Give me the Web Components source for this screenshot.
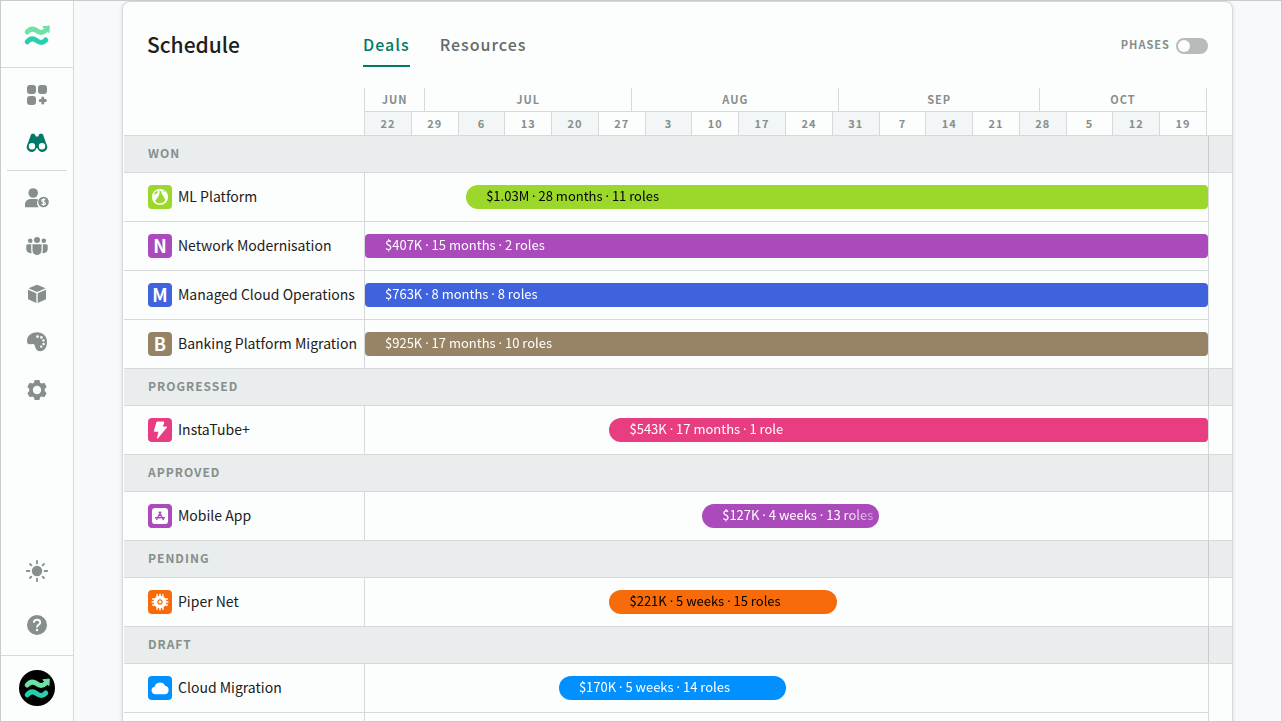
<!DOCTYPE html>
<html lang="en">
<head>
<meta charset="utf-8">
<title>Schedule</title>
<style>
  :root {
    --surface: #fcfdfd;
    --canvas: #f7fafa;
    --line: #d6d9d9;
    --band: #e9eded;
    --stripe: #f3f6f6;
    --text: #1c2020;
    --muted: #868f8c;
    --accent: #007a66;
  }
  * { box-sizing: border-box; }
  body {
    margin: 0;
    height: 100vh;
    overflow: hidden;
    border: 1px solid #c9cbcb;
    background: var(--canvas);
    color: var(--text);
    font: 14px/20px "Noto Sans CJK SC", "Noto Sans", sans-serif;
  }
</style>
</head>
<body>
<app-layout>
  <app-sidebar slot="sidebar">
    <app-icon slot="brand" name="logo" size="28"></app-icon>
    <nav-item icon="apps" label="Dashboard"></nav-item>
    <nav-item icon="binoculars" label="Schedule" active></nav-item>
    <nav-divider></nav-divider>
    <nav-item icon="client" label="Clients"></nav-item>
    <nav-item icon="team" label="Team"></nav-item>
    <nav-item icon="box" label="Products"></nav-item>
    <nav-item icon="palette" label="Branding"></nav-item>
    <nav-item icon="gear" label="Settings"></nav-item>
    <nav-item slot="tools" icon="sun" label="Theme"></nav-item>
    <nav-item slot="tools" icon="help" label="Help"></nav-item>
    <user-avatar slot="user"></user-avatar>
  </app-sidebar>

  <schedule-card heading="Schedule">
    <view-tab slot="tabs" active>Deals</view-tab>
    <view-tab slot="tabs">Resources</view-tab>
    <toggle-switch slot="actions" label="PHASES"></toggle-switch>

    <time-scale></time-scale>

    <deal-group label="WON">
      <deal-row name="ML Platform" icon="globe" color="#9bd82b" start="12" span="88" open-end dark>$1.03M · 28 months · 11 roles</deal-row>
      <deal-row name="Network Modernisation" letter="N" color="#ab4aba" start="0" span="100" open-start open-end>$407K · 15 months · 2 roles</deal-row>
      <deal-row name="Managed Cloud Operations" letter="M" color="#3e63dd" start="0" span="100" open-start open-end>$763K · 8 months · 8 roles</deal-row>
      <deal-row name="Banking Platform Migration" letter="B" color="#978365" start="0" span="100" open-start open-end>$925K · 17 months · 10 roles</deal-row>
    </deal-group>
    <deal-group label="PROGRESSED">
      <deal-row name="InstaTube+" icon="bolt" color="#e93d82" start="29" span="71" open-end>$543K · 17 months · 1 role</deal-row>
    </deal-group>
    <deal-group label="APPROVED">
      <deal-row name="Mobile App" icon="appstore" color="#ab4aba" start="40" span="21">$127K · 4 weeks · 13 roles</deal-row>
    </deal-group>
    <deal-group label="PENDING">
      <deal-row name="Piper Net" icon="chip" color="#f76b0a" start="29" span="27" dark>$221K · 5 weeks · 15 roles</deal-row>
    </deal-group>
    <deal-group label="DRAFT">
      <deal-row name="Cloud Migration" icon="cloud" color="#0090ff" start="23" span="27">$170K · 5 weeks · 14 roles</deal-row>
      <deal-row></deal-row>
    </deal-group>
  </schedule-card>
</app-layout>

<script>
const ICONS = {
  logo: `<g fill="none" stroke-width="5" stroke-linecap="round">
      <path stroke="#6ee2a4" d="M4.2 11C7 7.600 10 7 13.500 9.600S19.500 12.600 23.500 8.800"/>
      <path stroke="#27cfae" d="M4.200 20.800C7 17.400 10 16.800 13.500 19.400S19.700 22.400 22.800 19"/></g>
    <path fill="#6ee2a4" stroke="#6ee2a4" stroke-linejoin="round" d="M19.800 5.800 26.200 5 26 11.600Z"/>`,
  apps: `<rect x="4" y="4" width="9" height="9" rx="3"/><rect x="15" y="4" width="9" height="9" rx="3"/>
    <rect x="4" y="15" width="9" height="9" rx="3"/>
    <path d="M19.800 16.900v5.200M17.200 19.500h5.200" stroke="currentColor" stroke-width="3" stroke-linecap="round"/>`,
  binoculars: `<path fill-rule="evenodd" d="M7.600 6.800C7.600 5.400 8.600 4.800 10 4.800s2.200.6 2.400 1.600l.4 1.200h2.400l.4-1.200c.2-1 1-1.600 2.400-1.600s2.400.6 2.400 2L23.600 15.400A4.900 4.900 0 1 1 14.700 19.200h-1.400A4.900 4.900 0 1 1 4.400 15.400ZM9 14a3.200 3.200 0 1 0 0 6.400 3.200 3.200 0 0 0 0-6.400Zm10 0a3.200 3.200 0 1 0 0 6.400 3.200 3.200 0 0 0 0-6.400Z"/>`,
  client: `<circle cx="10.200" cy="9" r="4.800"/>
    <path d="M2 23.200v-2.400c0-3.600 2.400-5.800 5.800-5.800h5c1 0 1.800.2 2.500.5a6.400 6.400 0 0 0 .4 7.700Z"/>
    <circle cx="20.500" cy="18" r="5.300"/>
    <path d="M22.300 16.300c-.4-.7-1-1-1.800-1-1 0-1.800.5-1.800 1.300 0 1.900 3.700.9 3.700 2.800 0 .8-.8 1.300-1.900 1.300-.9 0-1.600-.3-2-1M20.500 14.300v7.400" fill="none" stroke="#fcfdfd" stroke-width="1.200"/>`,
  team: `<circle cx="14" cy="8" r="3"/><circle cx="7.200" cy="8.800" r="2.300"/><circle cx="20.800" cy="8.800" r="2.300"/>
    <path d="M9.500 12.300h9v6.200a4.500 4.500 0 0 1-9 0ZM8.200 12.300v6.200c0 1 .2 1.900.6 2.600-3 .5-5.500-1-5.500-4v-3.300c0-.9.6-1.500 1.500-1.500ZM19.800 12.300v6.200c0 1-.2 1.900-.6 2.600 3 .5 5.500-1 5.500-4v-3.300c0-.9-.6-1.500-1.500-1.500Z"/>`,
  box: `<path d="M14 4.800 22.600 8.300 14 11.900 5.400 8.300ZM5 9.800l8.300 3.400v9.900L5 19.200ZM23 9.800l-8.300 3.400v9.900L23 19.200Z"/>`,
  palette: `<path fill-rule="evenodd" d="M14 4.300c5.800 0 10 3.900 10 9.800 0 5.300-2.800 9.200-6.600 9.200-2.700 0-4.600-1.500-5.200-4.300-.5-2.300-.9-3.100-2.700-3L7 16.200c-1.900.1-3-1-3-3C4 8 8.200 4.300 14 4.300Z"/>
    <g fill="#fcfdfd"><circle cx="14.500" cy="8.600" r="1.400"/><circle cx="18.400" cy="9.400" r="1.300"/><circle cx="20.400" cy="12.400" r="1.200"/><circle cx="20.600" cy="16" r="1.200"/><circle cx="18.200" cy="18.600" r="1.200"/></g>`,
  gear: `<path fill-rule="evenodd" d="M11.300 4.800Q11.500 4 12.300 4h3.400q.8 0 1 .8l.4 1.900 1.400.8 1.900-.6q.8-.2 1.200.4l1.700 3q.4.700-.2 1.300L21.700 13v2l1.400 1.400q.6.600.2 1.300l-1.700 3q-.4.600-1.200.4l-1.900-.6-1.400.8-.4 1.900q-.2.800-1 .8h-3.400q-.8 0-1-.8l-.4-1.900-1.400-.8-1.900.6q-.8.200-1.200-.4l-1.700-3q-.4-.7.200-1.300L6.300 15v-2l-1.400-1.400q-.6-.6-.2-1.300l1.700-3q.4-.6 1.200-.4l1.900.6 1.400-.8ZM14 9.800a4.200 4.200 0 1 0 0 8.400 4.200 4.200 0 0 0 0-8.400Z"/>`,
  sun: `<circle cx="14" cy="14" r="5.200"/>
    <path d="M14 3.800v2.600M14 21.600v2.600M3.800 14h2.600M21.600 14h2.600M7 7l1.400 1.400M19.600 19.600 21 21M7 21l1.400-1.400M19.600 8.400 21 7" stroke="currentColor" stroke-width="1.800" stroke-linecap="round"/>`,
  help: `<circle cx="14" cy="14" r="10"/>
    <path d="M10.800 11.700c.1-1.900 1.400-3 3.200-3 1.900 0 3.200 1.100 3.200 2.700 0 2.500-3.200 2.400-3.200 5" fill="none" stroke="#fcfdfd" stroke-width="1.900"/><circle cx="14" cy="19" r="1.200" fill="#fcfdfd"/>`,
  globe: `<circle cx="14" cy="14" r="9.400"/>
    <path fill="var(--hole)" d="M13.200 6.400l2.600 1.200.3 3.200c1.500.5 1.600 2 2.200 3.300.8 1.500 2.400 2.500 1.400 4.300-1 1.900-3 2.900-5.500 2.900-2.600 0-4.800-1-6-3l2.500-2.900c.4-1.300 1.500-1.600 1.700-2.900.1-1.300 1-1.700 1.200-2.800Z"/>
    <path fill="var(--hole)" d="M8 8.400l2.800-1.600.6 2-2.200 1.600-1.800 1.200ZM17.600 6.200l2.600 1.800-1.600.6Z"/>`,
  bolt: `<path d="M10.400 4.700h8.200l-2 5.800h5.400L11 23.800l1.700-8.300H7.300Z" stroke="#fff" stroke-linejoin="round"/>`,
  appstore: `<rect x="4.600" y="4.600" width="18.800" height="18.800" rx="3.600"/>
    <path fill="none" stroke="var(--hole)" stroke-width="1.700" stroke-linecap="round" d="M13 9.600l4.900 8.600M15 9.600l-3.700 6.400M8.800 16h6M17.200 16h2M10.200 18l.2-.3"/>`,
  chip: `<circle cx="14" cy="14" r="7.300"/>
    <path d="M10.600 5.400v17.200M14 4.800v18.400M17.400 5.400v17.200M5.400 10.600h17.200M4.800 14h18.400M5.400 17.400h17.200" stroke="#fff" stroke-width="1.700" stroke-linecap="round"/>
    <circle cx="14" cy="14" r="2.400" fill="#fff" stroke="var(--hole)" stroke-width="1.400"/>`,
  cloud: `<path d="M8.600 21.400a4.500 4.500 0 0 1-.9-8.900 6.500 6.500 0 0 1 12.200-1 5 5 0 0 1-.4 9.900Z"/>`
};

class AppIcon extends HTMLElement {
  constructor() {
    super();
    this.attachShadow({ mode: 'open' });
  }

  connectedCallback() {
    const size = this.getAttribute('size') || 28;
    this.shadowRoot.innerHTML = `
      <style>
        :host { display: inline-flex; flex: none; }
        svg { display: block; fill: currentColor; }
      </style>
      <svg width="${size}" height="${size}" viewBox="0 0 28 28" aria-hidden="true">${ICONS[this.getAttribute('name')] || ''}</svg>
    `;
  }
}
customElements.define('app-icon', AppIcon);

class AppLayout extends HTMLElement {
  constructor() {
    super();
    this.attachShadow({ mode: 'open' });
    this.shadowRoot.innerHTML = `
      <style>
        :host { display: flex; height: 100%; }
        main { flex: 1; min-width: 0; padding: 0 48px; overflow: hidden; }
      </style>
      <slot name="sidebar"></slot>
      <main><slot></slot></main>
    `;
  }
}
customElements.define('app-layout', AppLayout);

class AppSidebar extends HTMLElement {
  constructor() {
    super();
    this.attachShadow({ mode: 'open' });
    this.shadowRoot.innerHTML = `
      <style>
        :host {
          display: flex;
          flex-direction: column;
          flex: none;
          width: 73px;
          background: var(--surface);
          border-right: 1px solid var(--line);
        }
        .brand, .user { display: flex; align-items: center; justify-content: center; height: 64px; }
        .brand { padding-top: 2px; border-bottom: 1px solid var(--line); }
        .user { padding-bottom: 1px; border-top: 1px solid var(--line); }
        nav { flex: 1; padding-top: 3px; }
        .tools { display: grid; gap: 6px; padding-bottom: 6px; }
      </style>
      <div class="brand"><slot name="brand"></slot></div>
      <nav><slot></slot></nav>
      <div class="tools"><slot name="tools"></slot></div>
      <div class="user"><slot name="user"></slot></div>
    `;
  }
}
customElements.define('app-sidebar', AppSidebar);

class NavItem extends HTMLElement {
  constructor() {
    super();
    this.attachShadow({ mode: 'open' });
  }

  connectedCallback() {
    this.shadowRoot.innerHTML = `
      <style>
        :host { display: block; color: var(--muted); }
        :host([active]) { color: var(--accent); }
        a { display: flex; align-items: center; justify-content: center; height: 48px; color: inherit; }
      </style>
      <a href="#" aria-label="${this.getAttribute('label')}">
        <app-icon name="${this.getAttribute('icon')}"></app-icon>
      </a>
    `;
  }
}
customElements.define('nav-item', NavItem);

class NavDivider extends HTMLElement {
  constructor() {
    super();
    this.attachShadow({ mode: 'open' });
    this.shadowRoot.innerHTML = `
      <style>
        :host { display: block; margin: 3px 6px; height: 1px; background: var(--line); }
      </style>
    `;
  }
}
customElements.define('nav-divider', NavDivider);

class UserAvatar extends HTMLElement {
  constructor() {
    super();
    this.attachShadow({ mode: 'open' });
    this.shadowRoot.innerHTML = `
      <style>
        :host { display: block; }
        button {
          display: flex;
          align-items: center;
          justify-content: center;
          width: 36px;
          height: 36px;
          padding: 0;
          border: 0;
          border-radius: 50%;
          background: #000;
        }
      </style>
      <button type="button" aria-label="Account"><app-icon name="logo"></app-icon></button>
    `;
  }
}
customElements.define('user-avatar', UserAvatar);

class ScheduleCard extends HTMLElement {
  constructor() {
    super();
    this.attachShadow({ mode: 'open' });
  }

  connectedCallback() {
    this.shadowRoot.innerHTML = `
      <style>
        :host {
          display: block;
          background: var(--surface);
          border: 1px solid var(--line);
          border-radius: 8px;
          box-shadow: 0 1px 4px rgba(0, 0, 0, 0.12);
        }
        header { display: flex; align-items: center; height: 45px; padding: 20px 24px 21px 0; }
        h1 { flex: none; box-sizing: border-box; width: 240px; margin: 0; padding: 0 0 2px 24px; font-size: 21px; line-height: 28px; font-weight: 500; }
        .tabs { display: flex; flex: 1; gap: 30px; }
        .body { padding-left: 1px; }
      </style>
      <header>
        <h1>${this.getAttribute('heading')}</h1>
        <div class="tabs" role="tablist"><slot name="tabs"></slot></div>
        <slot name="actions"></slot>
      </header>
      <div class="body"><slot></slot></div>
    `;
  }
}
customElements.define('schedule-card', ScheduleCard);

class ViewTab extends HTMLElement {
  constructor() {
    super();
    this.attachShadow({ mode: 'open' });
  }

  connectedCallback() {
    this.shadowRoot.innerHTML = `
      <style>
        :host { display: block; color: #646a68; }
        :host([active]) { color: var(--accent); }
        button {
          display: block;
          height: 45px;
          padding: 0;
          border: 0;
          border-bottom: 2px solid transparent;
          background: none;
          color: inherit;
          font: inherit;
          font-size: 16px;
          font-weight: 500;
          letter-spacing: 1px;
        }
        :host([active]) button { border-bottom-color: var(--accent); }
      </style>
      <button type="button" role="tab" aria-selected="${this.hasAttribute('active')}"><slot></slot></button>
    `;
  }
}
customElements.define('view-tab', ViewTab);

class ToggleSwitch extends HTMLElement {
  constructor() {
    super();
    this.attachShadow({ mode: 'open' });
  }

  connectedCallback() {
    this.shadowRoot.innerHTML = `
      <style>
        :host { display: block; padding-bottom: 1px; }
        label {
          display: flex;
          align-items: flex-end;
          gap: 6px;
          color: var(--muted);
          font-size: 11px;
          font-weight: 700;
          letter-spacing: 1px;
        }
        input {
          appearance: none;
          display: flex;
          align-items: center;
          box-sizing: border-box;
          width: 32px;
          height: 16px;
          margin: 0;
          padding: 2px;
          border-radius: 8px;
          background: #b7bbba;
        }
        input::before { content: ""; width: 12px; height: 12px; border-radius: 50%; background: var(--surface); }
        input:checked { justify-content: flex-end; background: var(--accent); }
      </style>
      <label>${this.getAttribute('label')} <input type="checkbox" role="switch"></label>
    `;
  }
}
customElements.define('toggle-switch', ToggleSwitch);

class TimeScale extends HTMLElement {
  constructor() {
    super();
    this.attachShadow({ mode: 'open' });
    // each month takes as many columns as it has visible days
    const months = [['JUN', 9], ['JUL', 31], ['AUG', 31], ['SEP', 30], ['OCT', 25]];
    const weeks = [22, 29, 6, 13, 20, 27, 3, 10, 17, 24, 31, 7, 14, 21, 28, 5, 12, 19];
    this.shadowRoot.innerHTML = `
      <style>
        :host {
          display: block;
          padding: 0 25px 0 240px;
          border-bottom: 1px solid var(--line);
          color: var(--muted);
          font-size: 11px;
          font-weight: 700;
          letter-spacing: 1px;
          text-align: center;
        }
        .scale { border-right: 1px solid var(--line); }
        .months, .weeks { display: grid; }
        .months { grid-template-columns: ${months.map(m => m[1] + 'fr').join(' ')}; border-bottom: 1px solid var(--line); }
        .weeks { grid-template-columns: repeat(${weeks.length}, minmax(0, 1fr)); }
        span { padding-bottom: 1px; line-height: 22px; border-left: 1px solid var(--line); }
        .weeks span:nth-child(odd) { background: var(--stripe); }
      </style>
      <div class="scale">
        <div class="months">${months.map(m => `<span>${m[0]}</span>`).join('')}</div>
        <div class="weeks">${weeks.map(w => `<span>${w}</span>`).join('')}</div>
      </div>
    `;
  }
}
customElements.define('time-scale', TimeScale);

class DealGroup extends HTMLElement {
  constructor() {
    super();
    this.attachShadow({ mode: 'open' });
  }

  connectedCallback() {
    this.shadowRoot.innerHTML = `
      <style>
        :host { display: block; }
        .band { padding-right: 23px; background: var(--band); border-bottom: 1px solid var(--line); box-shadow: 0 -1px var(--line); }
        h2 {
          margin: 0;
          padding: 0 0 2px 24px;
          border-right: 1px solid #c9cbcb;
          color: var(--muted);
          font-size: 12px;
          line-height: 34px;
          font-weight: 700;
          letter-spacing: 1px;
        }
      </style>
      <div class="band"><h2>${this.getAttribute('label')}</h2></div>
      <slot></slot>
    `;
  }
}
customElements.define('deal-group', DealGroup);

class DealRow extends HTMLElement {
  constructor() {
    super();
    this.attachShadow({ mode: 'open' });
  }

  connectedCallback() {
    const attr = name => this.getAttribute(name) || '';
    const badge = attr('letter') || `<app-icon name="${attr('icon')}" size="24"></app-icon>`;
    const left = this.hasAttribute('open-start') ? 4 : 12;
    const right = this.hasAttribute('open-end') ? 4 : 12;
    // the CJK font has a full-width middle dot, so dots get a font of their own
    const summary = this.textContent.split('·').join('<i>·</i>');
    this.shadowRoot.innerHTML = `
      <style>
        :host {
          display: flex;
          height: 49px;
          margin-right: 23px;
          border-right: 1px solid var(--line);
          border-bottom: 1px solid var(--line);
        }
        .name { display: flex; align-items: center; flex: none; gap: 6px; box-sizing: border-box; width: 240px; padding-left: 24px; font-size: 14px; white-space: nowrap; }
        .label { padding-bottom: 2px; }
        .badge {
          --hole: ${attr('color')};
          display: flex;
          align-items: center;
          justify-content: center;
          flex: none;
          width: 24px;
          height: 24px;
          border-radius: 4px;
          background: ${attr('color')};
          color: #fff;
          font-size: 18px;
          line-height: 22px;
          font-weight: 700;
        }
        .letter { align-items: flex-start; }
        .track { flex: 1; min-width: 0; padding: 12px 0; border-left: 1px solid var(--line); }
        .bar {
          box-sizing: border-box;
          width: ${attr('span')}%;
          height: 24px;
          margin-left: ${attr('start')}%;
          padding: 0 4px 0 20px;
          border-radius: ${left}px ${right}px ${right}px ${left}px;
          background: ${attr('color')};
          color: ${this.hasAttribute('dark') ? '#000' : '#fff'};
          font-size: 13px;
          line-height: 22px;
          white-space: nowrap;
        }
        .bar div { height: 24px; overflow: hidden; mask-image: linear-gradient(to left, rgba(0, 0, 0, 0.4), #000 32px); }
        i { font-family: "Noto Sans", sans-serif; font-style: normal; line-height: 1; }
      </style>
      <div class="name">${attr('name') ? `<span class="badge ${attr('letter') && 'letter'}">${badge}</span><span class="label">${attr('name')}</span>` : ''}</div>
      <div class="track">${attr('name') ? `<div class="bar"><div>${summary}</div></div>` : ''}</div>
    `;
  }
}
customElements.define('deal-row', DealRow);
</script>
</body>
</html>
